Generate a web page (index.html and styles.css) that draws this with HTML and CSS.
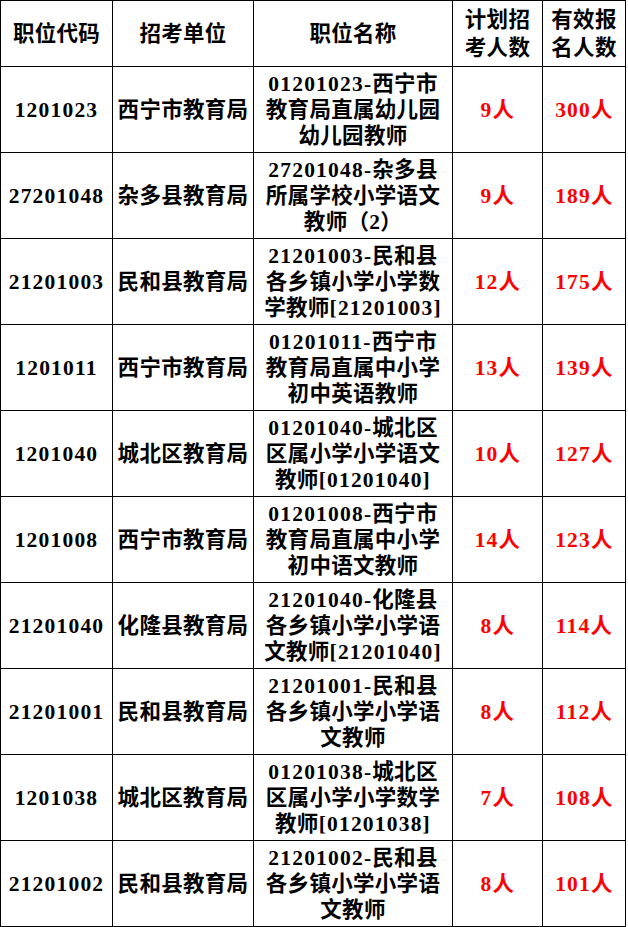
FILE: index.html
```html
<!DOCTYPE html>
<html lang="zh-CN">
<head>
<meta charset="utf-8">
<title>职位报名人数</title>
<link rel="stylesheet" href="styles.css">
</head>
<body>
<div class="grid">
  <div class="cell head"><div class="t">职位代码</div></div>
  <div class="cell head"><div class="t">招考单位</div></div>
  <div class="cell head"><div class="t">职位名称</div></div>
  <div class="cell head"><div class="t">计划招<br>考人数</div></div>
  <div class="cell head"><div class="t">有效报<br>名人数</div></div>

  <div class="cell"><div class="t"><span class="num">1201023</span></div></div>
  <div class="cell"><div class="t">西宁市教育局</div></div>
  <div class="cell"><div class="t"><span class="num">01201023-</span>西宁市<br>教育局直属幼儿园<br>幼儿园教师</div></div>
  <div class="cell red"><div class="t"><span class="num">9</span>人</div></div>
  <div class="cell red"><div class="t"><span class="num">300</span>人</div></div>

  <div class="cell"><div class="t"><span class="num">27201048</span></div></div>
  <div class="cell"><div class="t">杂多县教育局</div></div>
  <div class="cell"><div class="t"><span class="num">27201048-</span>杂多县<br>所属学校小学语文<br>教师（2）</div></div>
  <div class="cell red"><div class="t"><span class="num">9</span>人</div></div>
  <div class="cell red"><div class="t"><span class="num">189</span>人</div></div>

  <div class="cell"><div class="t"><span class="num">21201003</span></div></div>
  <div class="cell"><div class="t">民和县教育局</div></div>
  <div class="cell"><div class="t"><span class="num">21201003-</span>民和县<br>各乡镇小学小学数<br>学教师<span class="num">[21201003]</span></div></div>
  <div class="cell red"><div class="t"><span class="num">12</span>人</div></div>
  <div class="cell red"><div class="t"><span class="num">175</span>人</div></div>

  <div class="cell"><div class="t"><span class="num">1201011</span></div></div>
  <div class="cell"><div class="t">西宁市教育局</div></div>
  <div class="cell"><div class="t"><span class="num">01201011-</span>西宁市<br>教育局直属中小学<br>初中英语教师</div></div>
  <div class="cell red"><div class="t"><span class="num">13</span>人</div></div>
  <div class="cell red"><div class="t"><span class="num">139</span>人</div></div>

  <div class="cell"><div class="t"><span class="num">1201040</span></div></div>
  <div class="cell"><div class="t">城北区教育局</div></div>
  <div class="cell"><div class="t"><span class="num">01201040-</span>城北区<br>区属小学小学语文<br>教师<span class="num">[01201040]</span></div></div>
  <div class="cell red"><div class="t"><span class="num">10</span>人</div></div>
  <div class="cell red"><div class="t"><span class="num">127</span>人</div></div>

  <div class="cell"><div class="t"><span class="num">1201008</span></div></div>
  <div class="cell"><div class="t">西宁市教育局</div></div>
  <div class="cell"><div class="t"><span class="num">01201008-</span>西宁市<br>教育局直属中小学<br>初中语文教师</div></div>
  <div class="cell red"><div class="t"><span class="num">14</span>人</div></div>
  <div class="cell red"><div class="t"><span class="num">123</span>人</div></div>

  <div class="cell"><div class="t"><span class="num">21201040</span></div></div>
  <div class="cell"><div class="t">化隆县教育局</div></div>
  <div class="cell"><div class="t"><span class="num">21201040-</span>化隆县<br>各乡镇小学小学语<br>文教师<span class="num">[21201040]</span></div></div>
  <div class="cell red"><div class="t"><span class="num">8</span>人</div></div>
  <div class="cell red"><div class="t"><span class="num">114</span>人</div></div>

  <div class="cell"><div class="t"><span class="num">21201001</span></div></div>
  <div class="cell"><div class="t">民和县教育局</div></div>
  <div class="cell"><div class="t"><span class="num">21201001-</span>民和县<br>各乡镇小学小学语<br>文教师</div></div>
  <div class="cell red"><div class="t"><span class="num">8</span>人</div></div>
  <div class="cell red"><div class="t"><span class="num">112</span>人</div></div>

  <div class="cell"><div class="t"><span class="num">1201038</span></div></div>
  <div class="cell"><div class="t">城北区教育局</div></div>
  <div class="cell"><div class="t"><span class="num">01201038-</span>城北区<br>区属小学小学数学<br>教师<span class="num">[01201038]</span></div></div>
  <div class="cell red"><div class="t"><span class="num">7</span>人</div></div>
  <div class="cell red"><div class="t"><span class="num">108</span>人</div></div>

  <div class="cell"><div class="t"><span class="num">21201002</span></div></div>
  <div class="cell"><div class="t">民和县教育局</div></div>
  <div class="cell"><div class="t"><span class="num">21201002-</span>民和县<br>各乡镇小学小学语<br>文教师</div></div>
  <div class="cell red"><div class="t"><span class="num">8</span>人</div></div>
  <div class="cell red"><div class="t"><span class="num">101</span>人</div></div>
</div>
</body>
</html>
```

FILE: styles.css
```css
html, body {
  margin: 0;
  padding: 0;
  background: #ffffff;
}

.grid {
  display: grid;
  grid-template-columns: 111px 140px 198px 89px 82px;
  grid-template-rows: 65px repeat(10, 85px);
  gap: 1px;
  padding: 1px;
  background: #000000;
  width: max-content;
}

.cell {
  background: #ffffff;
  display: flex;
  align-items: center;
  justify-content: center;
  text-align: center;
  font-family: "Liberation Serif", "Noto Sans CJK SC", serif;
  font-weight: bold;
  font-size: 21.5px;
  line-height: 26px;
  letter-spacing: 0.3px;
  color: #000000;
  white-space: nowrap;
}

.num {
  font-weight: 600;
  letter-spacing: 1.2px;
}

.head {
  line-height: 28px;
}

.red {
  color: #ff0000;
}
```
